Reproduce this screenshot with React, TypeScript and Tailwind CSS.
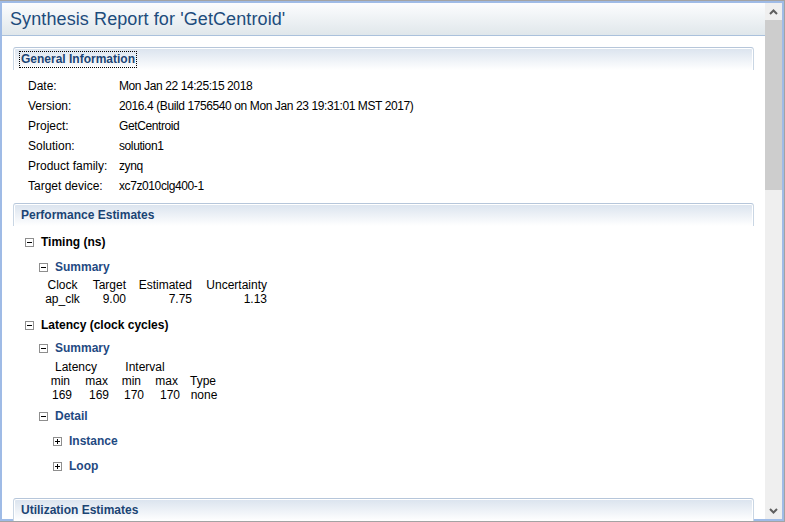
import React from "react";

const F = { fontFamily: '"Liberation Sans", Arial, sans-serif' };

function Box({ plus }: { plus?: boolean }) {
  return (
    <svg width="9" height="9" className="shrink-0">
      <rect x="0.5" y="0.5" width="8" height="8" fill="white" stroke="#8e8e8e" />
      <path d="M2 4.5h5" stroke="#000" />
      {plus && <path d="M4.5 2v5" stroke="#000" />}
    </svg>
  );
}

function SectionHeader({ title, focus }: { title: string; focus?: boolean }) {
  return (
    <div className="ml-[11px] mr-[11px] h-[23px] flex items-center rounded-t-[3px] border border-b-0 border-t-[#b6c6da] border-x-[#c9d6e4] bg-gradient-to-b from-[#dae3ee] to-[#ffffff] shadow-[inset_0_1px_0_#ffffff,inset_1px_0_0_#ffffff,inset_-1px_0_0_#ffffff] pl-[5px]">
      <span
        className={
          "text-[12px] font-bold text-[#1b4474] leading-[15px] px-[1px] " +
          (focus ? "border border-dotted border-black" : "border border-transparent")
        }
      >
        {title}
      </span>
    </div>
  );
}

function TreeRow({
  indent,
  label,
  blue,
  plus,
  mt,
}: {
  indent: string;
  label: string;
  blue?: boolean;
  plus?: boolean;
  mt: string;
}) {
  return (
    <div className={"h-[20px] flex items-center gap-[7px] " + indent + " " + mt}>
      <Box plus={plus} />
      <span className={"text-[12px] font-bold " + (blue ? "text-[#1f4a82]" : "text-black")}>{label}</span>
    </div>
  );
}

const info: [string, string][] = [
  ["Date:", "Mon Jan 22 14:25:15 2018"],
  ["Version:", "2016.4 (Build 1756540 on Mon Jan 23 19:31:01 MST 2017)"],
  ["Project:", "GetCentroid"],
  ["Solution:", "solution1"],
  ["Product family:", "zynq"],
  ["Target device:", "xc7z010clg400-1"],
];

export default function App() {
  return (
    <div
      style={F}
      className="w-[785px] h-[522px] overflow-hidden bg-white border-t border-b border-r border-[#a3a3a3]"
    >
      <div className="flex h-full border-2 border-[#9fbbe6]">
        <div className="flex-1 min-w-0 flex flex-col">
          <div className="h-[33px] shrink-0 border-b border-[#aac1dc] bg-gradient-to-b from-[#fcfdfe] to-[#e0e7eb] flex items-center pl-[8px]">
            <span className="text-[18px] text-[#1d4c7c] leading-none tracking-[0.1px]">
              Synthesis Report for 'GetCentroid'
            </span>
          </div>
          <div className="flex-1 min-h-0 pt-[11px] text-[12px] text-black">
            <SectionHeader title="General Information" focus />
            <div className="mt-[6px]">
              {info.map(([k, v]) => (
                <div key={k} className="h-[20px] flex items-center">
                  <span className="w-[91px] pl-[26px] shrink-0 box-content">{k}</span>
                  <span className="tracking-[-0.4px]">{v}</span>
                </div>
              ))}
            </div>
            <div className="mt-[7px]">
              <SectionHeader title="Performance Estimates" />
            </div>
            <TreeRow indent="pl-[23px]" label="Timing (ns)" mt="mt-[6px]" />
            <TreeRow indent="pl-[37px]" label="Summary" blue mt="mt-[5px]" />
            <div className="mt-[1px] ml-[42px] leading-[14px]">
              <div className="flex">
                <span className="w-[37px] text-center">Clock</span>
                <span className="w-[45px] text-right">Target</span>
                <span className="w-[66px] text-right">Estimated</span>
                <span className="w-[75px] text-right">Uncertainty</span>
              </div>
              <div className="flex">
                <span className="w-[37px] text-center">ap_clk</span>
                <span className="w-[45px] text-right">9.00</span>
                <span className="w-[66px] text-right">7.75</span>
                <span className="w-[75px] text-right">1.13</span>
              </div>
            </div>
            <TreeRow indent="pl-[23px]" label="Latency (clock cycles)" mt="mt-[9px]" />
            <TreeRow indent="pl-[37px]" label="Summary" blue mt="mt-[3px]" />
            <div className="mt-[2px] ml-[44px] leading-[14px]">
              <div className="flex">
                <span className="w-[60px] text-center">Latency</span>
                <span className="w-[78px] text-center">Interval</span>
              </div>
              <div className="flex">
                <span className="w-[24px] text-right">min</span>
                <span className="w-[38px] text-right">max</span>
                <span className="w-[33px] text-right">min</span>
                <span className="w-[37px] text-right">max</span>
                <span className="w-[50px] text-center">Type</span>
              </div>
              <div className="flex">
                <span className="w-[26px] text-right">169</span>
                <span className="w-[37px] text-right">169</span>
                <span className="w-[35px] text-right">170</span>
                <span className="w-[36px] text-right">170</span>
                <span className="w-[48px] text-center">none</span>
              </div>
            </div>
            <TreeRow indent="pl-[37px]" label="Detail" blue mt="mt-[4px]" />
            <TreeRow indent="pl-[51px]" label="Instance" blue plus mt="mt-[5px]" />
            <TreeRow indent="pl-[51px]" label="Loop" blue plus mt="mt-[5px]" />
            <div className="mt-[22px]">
              <SectionHeader title="Utilization Estimates" />
            </div>
          </div>
        </div>
        <div className="w-[17px] shrink-0 bg-[#efefef] flex flex-col">
          <div className="h-[17px] flex items-center justify-center">
            <svg width="9" height="6">
              <path d="M1 5L4.5 1.5L8 5" stroke="#5f5f5f" strokeWidth="2" fill="none" />
            </svg>
          </div>
          <div className="h-[170px] bg-[#cdcdcd]" />
          <div className="flex-1" />
          <div className="h-[17px] flex items-center justify-center">
            <svg width="9" height="6">
              <path d="M1 1L4.5 4.5L8 1" stroke="#5f5f5f" strokeWidth="2" fill="none" />
            </svg>
          </div>
        </div>
      </div>
    </div>
  );
}
